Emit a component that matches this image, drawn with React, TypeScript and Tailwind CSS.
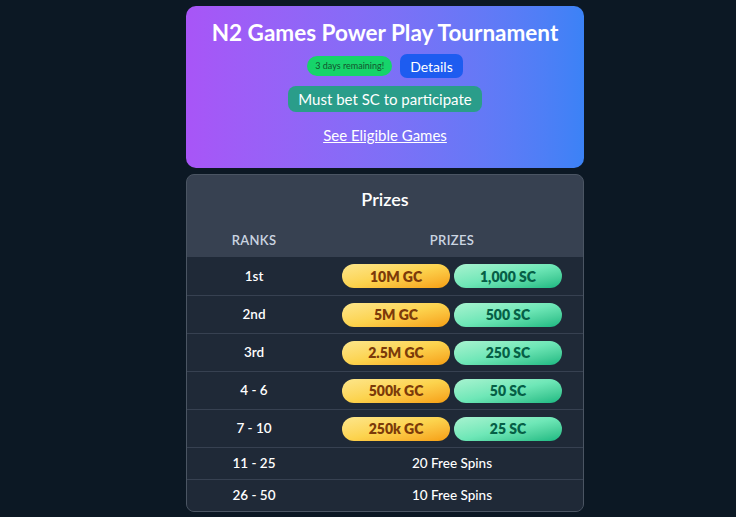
import React from "react";

const rows: { rank: string; gc?: string; sc?: string; spins?: string }[] = [
  { rank: "1st", gc: "10M GC", sc: "1,000 SC" },
  { rank: "2nd", gc: "5M GC", sc: "500 SC" },
  { rank: "3rd", gc: "2.5M GC", sc: "250 SC" },
  { rank: "4 - 6", gc: "500k GC", sc: "50 SC" },
  { rank: "7 - 10", gc: "250k GC", sc: "25 SC" },
  { rank: "11 - 25", spins: "20 Free Spins" },
  { rank: "26 - 50", spins: "10 Free Spins" },
];

export default function App() {
  return (
    <div
      className="min-h-[517px] w-full bg-[#0c1824] flex justify-center pt-[6px] pl-[34px]"
      style={{ fontFamily: "Lato, 'Noto Sans', sans-serif" }}
    >
      <div className="w-[398px] flex flex-col gap-[6px]">
        <div className="rounded-[10px] bg-gradient-to-r from-[#a855f7] to-[#3b82f6] flex flex-col items-center pt-[13px] pb-[24px]">
          <h1 className="text-[22.5px] font-bold text-white leading-[28px]">
            N2 Games Power Play Tournament
          </h1>
          <div className="flex items-center gap-[8px] mt-[7px]">
            <span className="rounded-full bg-[#16d46a] text-[#14532d] text-[9px] px-[8px] h-[20px] flex items-center">
              3 days remaining!
            </span>
            <span className="rounded-[7px] bg-[#1d5cf0] text-white text-[14px] px-[10px] h-[24px] flex items-center">
              Details
            </span>
          </div>
          <div className="mt-[8px] rounded-[8px] bg-[#2a9d8a] text-white text-[15px] px-[10px] h-[26px] flex items-center">
            Must bet SC to participate
          </div>
          <a className="mt-[14px] text-white text-[15px] underline leading-[18px]">See Eligible Games</a>
        </div>

        <div className="rounded-[8px] border border-[#4b5563] bg-[#374151] overflow-hidden">
          <div className="text-center text-white text-[18px] font-semibold pt-[13px] pb-[12px] leading-[22px]">
            Prizes
          </div>
          <div className="grid grid-cols-[134px_1fr] text-[13px] font-semibold text-[#cbd5e1] tracking-wide h-[35px] pt-[3px] items-center">
            <div className="text-center">RANKS</div>
            <div className="text-center">PRIZES</div>
          </div>
          <div className="bg-[#1f2937]">
            {rows.map((r, i) => (
              <div
                key={r.rank}
                className={`grid grid-cols-[134px_1fr] items-center text-white text-[13.5px] font-semibold ${
                  r.spins ? "h-[32px]" : "h-[38px]"
                } ${i > 0 ? "border-t border-[#374151]" : ""}`}
              >
                <div className="text-center">{r.rank}</div>
                {r.spins ? (
                  <div className="text-center font-medium">{r.spins}</div>
                ) : (
                  <div className="flex justify-center gap-[4px]">
                    <span className="w-[108px] h-[24px] rounded-full bg-gradient-to-br from-[#fde68a] via-[#fcd34d] to-[#f59e0b] text-[#7c3a0a] text-[14px] font-extrabold flex items-center justify-center">
                      {r.gc}
                    </span>
                    <span className="w-[108px] h-[24px] rounded-full bg-gradient-to-br from-[#a7f3d0] via-[#6ee7b7] to-[#10b981] text-[#065f46] text-[14px] font-extrabold flex items-center justify-center">
                      {r.sc}
                    </span>
                  </div>
                )}
              </div>
            ))}
          </div>
        </div>
      </div>
    </div>
  );
}
